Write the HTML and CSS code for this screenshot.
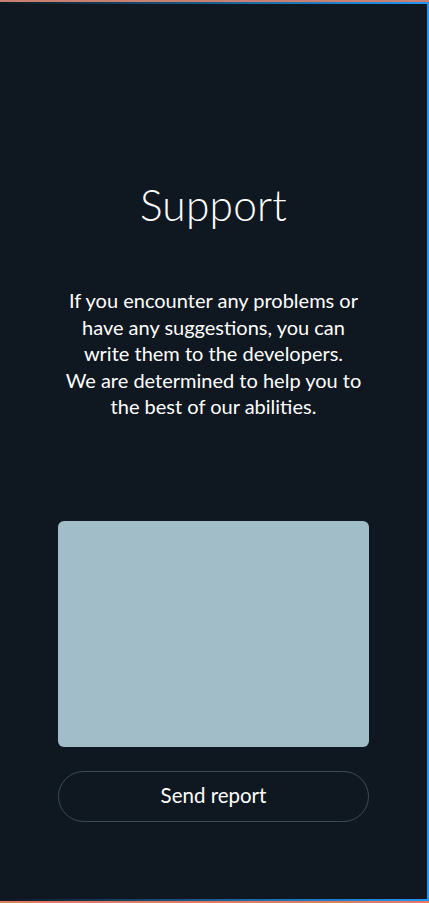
FILE: index.html
```html
<!DOCTYPE html>
<html lang="en">
<head>
<meta charset="utf-8">
<title>Support</title>
<link rel="stylesheet" href="styles.css">
</head>
<body>
<div class="frame">
  <main class="page">
    <h1 class="title">Support</h1>
    <p class="intro">If you encounter any problems or<br>have any suggestions, you can<br>write them to the developers.<br>We are determined to help you to<br>the best of our abilities.</p>
    <textarea class="report" aria-label="Report"></textarea>
    <button class="send" type="button">Send report</button>
  </main>
</div>
</body>
</html>
```
FILE: styles.css
```css
html, body {
  margin: 0;
  padding: 0;
  height: 100%;
  background: #0f1820;
}
body {
  font-family: Lato, "Open Sans", "Liberation Sans", sans-serif;
  color: #ffffff;
}
.frame {
  box-sizing: border-box;
  height: 903px;
  border-top: 2px solid #c98070;
  border-bottom: 2px solid #e47a66;
}
.page {
  box-sizing: border-box;
  height: 100%;
  border-top: 2px solid transparent;
  border-image: linear-gradient(90deg, #0f1820 0%, #1b6ea8 60%, #2196f3 100%) 1;
  border-right: 2px solid #1e88e5;
  border-bottom: 2px solid #1e88e5;
  border-left: 0;
  display: flex;
  flex-direction: column;
  align-items: center;
  padding-top: 177px;
}
.title {
  margin: 0;
  font-weight: 300;
  font-size: 42.5px;
  line-height: 48px;
  letter-spacing: 0.2px;
}
.intro {
  margin: 58px 0 0;
  font-size: 20px;
  line-height: 26.6px;
  text-align: center;
  font-weight: 400;
  white-space: nowrap;
}
.report {
  box-sizing: border-box;
  margin-top: 101px;
  width: 311px;
  height: 226px;
  border: 0;
  border-radius: 6px;
  background: #a1bdc8;
  resize: none;
  padding: 12px;
  font: inherit;
  color: #0f1820;
}
.send {
  box-sizing: border-box;
  margin-top: 24px;
  width: 311px;
  height: 51px;
  border: 1px solid #3b4b56;
  border-radius: 26px;
  background: transparent;
  color: #ffffff;
  font-family: inherit;
  font-size: 20.5px;
  font-weight: 400;
  padding: 0 0 2px;
}
```
